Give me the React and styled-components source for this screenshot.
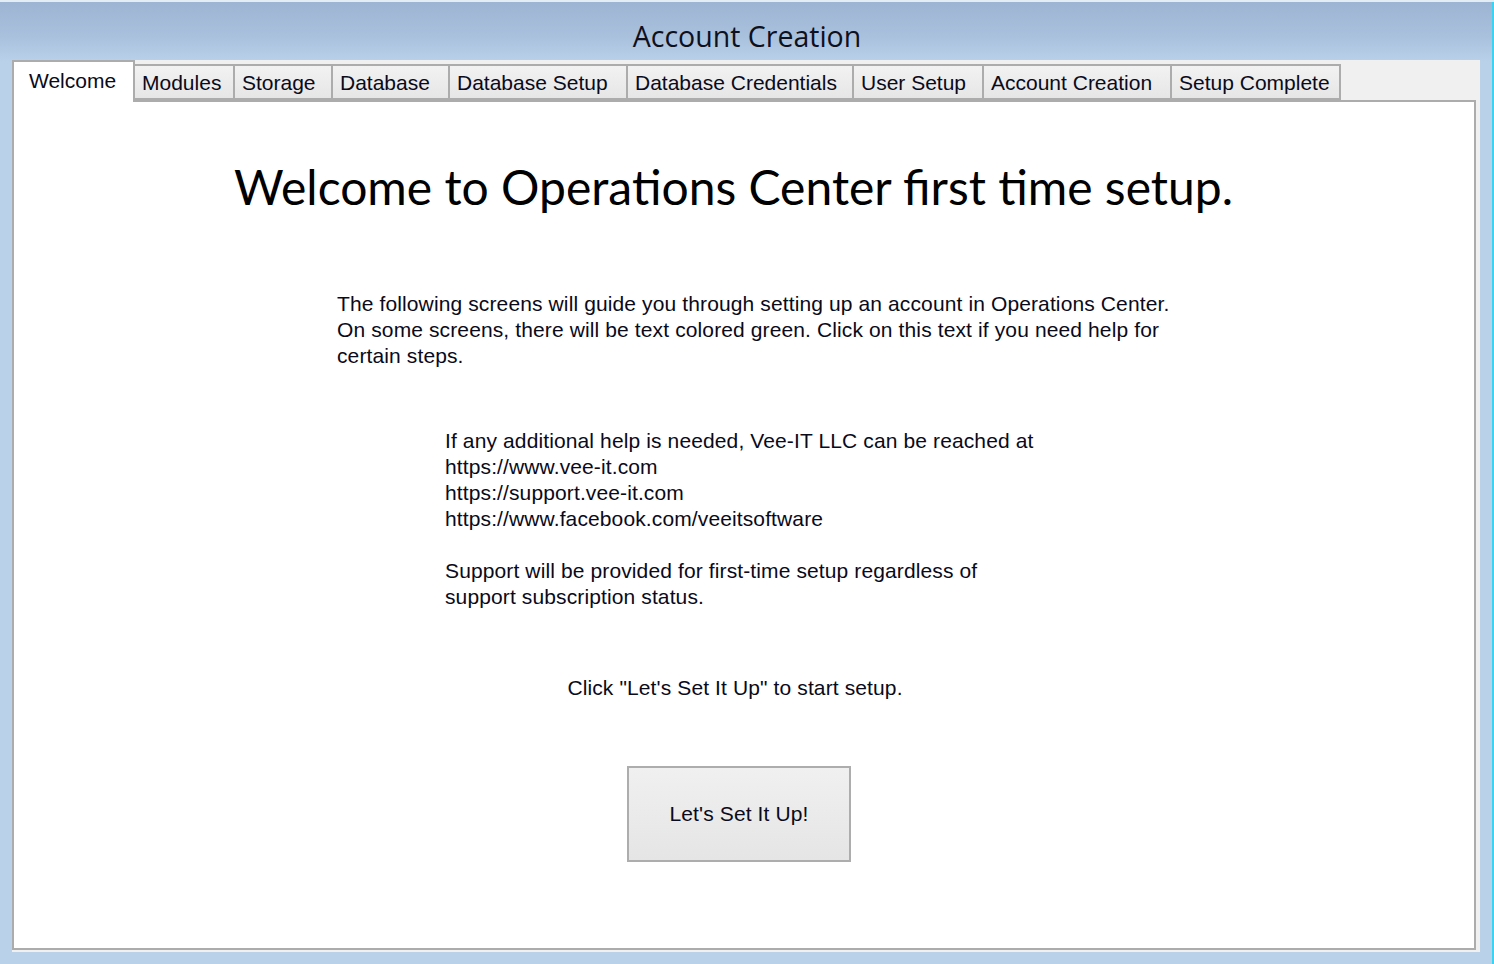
import React from 'react';
import styled, { createGlobalStyle } from 'styled-components';

const tabs = [
  { label: 'Welcome', width: 123 },
  { label: 'Modules', width: 100 },
  { label: 'Storage', width: 98 },
  { label: 'Database', width: 117 },
  { label: 'Database Setup', width: 178 },
  { label: 'Database Credentials', width: 226 },
  { label: 'User Setup', width: 130 },
  { label: 'Account Creation', width: 188 },
  { label: 'Setup Complete', width: 169 },
];

const App = () => {
  return (
    <Window>
      <GlobalStyle />
      <TitleBar>Account Creation</TitleBar>
      <TabControl>
        <TabStrip>
          {tabs.map((t, i) => (
            <Tab key={t.label} $active={i === 0} $width={t.width}>
              {t.label}
            </Tab>
          ))}
        </TabStrip>
        <Panel>
          <Heading>Welcome to Operations Center first time setup.</Heading>
          <Paragraph $indent={323} $top={75}>
            The following screens will guide you through setting up an account in Operations Center.
            <br />
            On some screens, there will be text colored green. Click on this text if you need help for
            <br />
            certain steps.
          </Paragraph>
          <Paragraph $indent={431} $top={59}>
            If any additional help is needed, Vee-IT LLC can be reached at
            <br />
            https://www.vee-it.com
            <br />
            https://support.vee-it.com
            <br />
            https://www.facebook.com/veeitsoftware
            <br />
            <br />
            Support will be provided for first-time setup regardless of
            <br />
            support subscription status.
          </Paragraph>
          <CenterLine>Click "Let's Set It Up" to start setup.</CenterLine>
          <ButtonRow>
            <SetupButton>Let's Set It Up!</SetupButton>
          </ButtonRow>
        </Panel>
      </TabControl>
      <EdgeStripe />
    </Window>
  );
};

export default App;

const GlobalStyle = createGlobalStyle`
  html, body {
    margin: 0;
    padding: 0;
    overflow: hidden;
  }
  body {
    font-family: "Liberation Sans", Arial, sans-serif;
    color: #000;
  }
`;

const Window = styled.div`
  position: relative;
  width: 1494px;
  height: 964px;
  box-sizing: border-box;
  border-top: 2px solid #e4ecf4;
  background: linear-gradient(to bottom, #9db5d2 0px, #a9c1dd 35px, #bad1ea 60px, #bad1ea 100%);
  display: flex;
  flex-direction: column;
`;

const TitleBar = styled.div`
  height: 58px;
  display: flex;
  align-items: center;
  justify-content: center;
  padding-top: 10px;
  padding-left: 0;
  font-family: "Open Sans", "Noto Sans", sans-serif;
  font-size: 28.5px;
  color: #0e1020;
  box-sizing: border-box;
`;

const TabControl = styled.div`
  margin-left: 12px;
  width: 1468px;
  height: 892px;
  background: #f0f0f0;
  display: flex;
  flex-direction: column;
`;

const TabStrip = styled.div`
  display: flex;
  align-items: flex-end;
  height: 40px;
  position: relative;
  z-index: 1;
`;

const Tab = styled.div`
  box-sizing: border-box;
  width: ${(p) => p.$width}px;
  height: ${(p) => (p.$active ? 42 : 36)}px;
  margin-bottom: ${(p) => (p.$active ? -2 : 0)}px;
  align-self: ${(p) => (p.$active ? 'flex-start' : 'flex-end')};
  border: 2px solid #acacac;
  border-left: ${(p) => (p.$active ? '2px solid #acacac' : 'none')};
  border-bottom: ${(p) => (p.$active ? 'none' : '2px solid #acacac')};
  background: ${(p) =>
    p.$active ? '#ffffff' : 'linear-gradient(to bottom, #f2f2f2, #e6e6e6)'};
  font-size: 21px;
  line-height: 1;
  padding: ${(p) => (p.$active ? '8px 0 0 15px' : '6px 0 0 7px')};
  white-space: nowrap;
  color: #0a0a1a;
`;

const Panel = styled.div`
  box-sizing: border-box;
  width: 1464px;
  height: 850px;
  background: #ffffff;
  border: 2px solid #acacac;
  display: flex;
  flex-direction: column;
`;

const Heading = styled.h1`
  margin: 56px 0 0 0;
  padding-right: 21px;
  text-align: center;
  font-family: Lato, "Noto Sans", sans-serif;
  font-weight: 400;
  font-size: 48px;
  line-height: 58px;
  color: #000;
`;

const Paragraph = styled.p`
  margin: ${(p) => p.$top}px 0 0 ${(p) => p.$indent}px;
  font-size: 21px;
  line-height: 26px;
  letter-spacing: 0.12px;
  color: #0a0a1a;
`;

const CenterLine = styled.p`
  margin: 65px 0 0 0;
  text-align: center;
  padding-right: 18px;
  font-size: 21px;
  line-height: 26px;
  letter-spacing: 0.12px;
  color: #0a0a1a;
`;

const ButtonRow = styled.div`
  display: flex;
  justify-content: center;
  margin-top: 65px;
  padding-right: 10px;
`;

const SetupButton = styled.button`
  width: 224px;
  height: 96px;
  border: 2px solid #adadad;
  background: linear-gradient(to bottom, #f0f0f0, #e5e5e5);
  font-family: "Liberation Sans", Arial, sans-serif;
  font-size: 21px;
  letter-spacing: 0.12px;
  color: #0a0a1a;
  padding: 0;
  cursor: pointer;
`;

const EdgeStripe = styled.div`
  position: absolute;
  top: 0;
  right: 0;
  width: 2px;
  height: 100%;
  background: #3cd2f2;
`;
